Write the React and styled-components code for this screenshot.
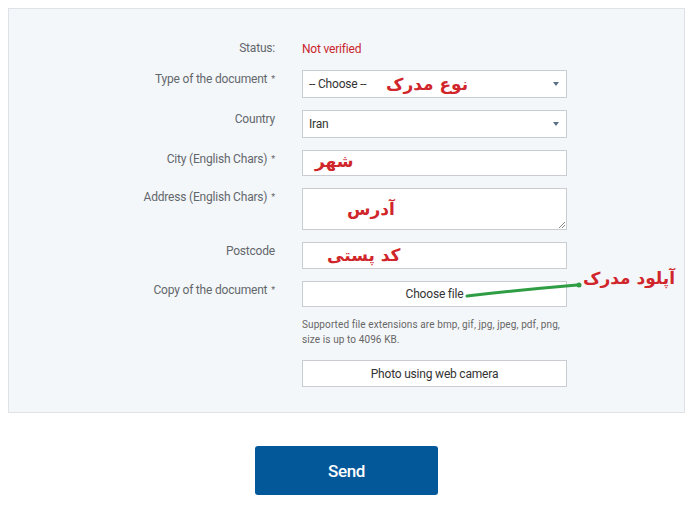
import styled, { createGlobalStyle } from 'styled-components';

const GlobalStyle = createGlobalStyle`
  body {
    margin: 0;
    background: #fff;
    font-family: Roboto, "Open Sans", sans-serif;
  }
`;

const Page = styled.div`
  width: 696px;
  padding-top: 8px;
`;

const Panel = styled.div`
  margin-left: 8px;
  width: 677px;
  box-sizing: border-box;
  background: #f4f7fa;
  border: 1px solid #dfe3e7;
  padding: 31px 0 25px;
  display: grid;
  grid-template-columns: 266px 265px;
  column-gap: 27px;
  row-gap: 12px;
  align-items: start;
`;

const Label = styled.div`
  text-align: right;
  font-size: 12px;
  line-height: 16px;
  padding-top: ${({ offset }) => offset || 0}px;
  color: #63676c;
  letter-spacing: -0.2px;
`;

const Star = styled.span`
  font-size: 9px;
  vertical-align: top;
  margin-left: 4px;
`;

const StatusValue = styled.div`
  font-size: 12px;
  line-height: 17px;
  padding-top: 1px;
  color: #c8262c;
  letter-spacing: -0.2px;
`;

const Field = styled.div`
  position: relative;
`;

const Box = styled.div`
  box-sizing: border-box;
  height: ${({ h }) => h || 27}px;
  background: #fff;
  border: 1px solid #c9cdd2;
  display: flex;
  align-items: center;
  padding: 0 6px;
  font-size: 12px;
  color: #333;
  letter-spacing: -0.2px;
`;

const Arrow = styled.span`
  margin-left: auto;
  width: 0;
  height: 0;
  border-left: 3.5px solid transparent;
  border-right: 3.5px solid transparent;
  border-top: 4px solid #5a6e84;
  margin-right: 1px;
`;

const Grip = styled.svg`
  position: absolute;
  right: 1px;
  bottom: 1px;
`;

const FileButton = styled.div`
  box-sizing: border-box;
  height: ${({ h }) => h || 27}px;
  background: #fff;
  border: 1px solid #c9cdd2;
  display: flex;
  align-items: center;
  justify-content: center;
  font-size: 12px;
  color: #333;
  letter-spacing: -0.2px;
`;

const Hint = styled.div`
  margin: 10px 0 13px;
  font-size: 10px;
  line-height: 15px;
  color: #666;
  letter-spacing: 0.1px;
`;

const Note = styled.span`
  position: absolute;
  left: ${({ x }) => x}px;
  top: ${({ y }) => y}px;
  font-family: "DejaVu Sans", sans-serif;
  font-weight: bold;
  font-size: 17px;
  line-height: 20px;
  color: #d0262b;
  white-space: nowrap;
  direction: rtl;
`;

const Stroke = styled.svg`
  position: absolute;
  left: 160px;
  top: 0;
`;

const Footer = styled.div`
  width: 677px;
  margin-left: 8px;
  display: flex;
  justify-content: center;
  padding-top: 33px;
`;

const SendButton = styled.button`
  width: 183px;
  height: 49px;
  border: none;
  border-radius: 3px;
  background: #03589a;
  color: #fff;
  font-family: Roboto, sans-serif;
  font-size: 17px;
  font-weight: 500;
  letter-spacing: -0.4px;
`;

export default function App() {
  return (
    <Page>
      <GlobalStyle />
      <Panel>
        <Label>Status:</Label>
        <StatusValue>Not verified</StatusValue>

        <Label offset={1}>
          Type of the document<Star>*</Star>
        </Label>
        <Field>
          <Box h={28}>
            -- Choose --
            <Arrow />
          </Box>
          <Note x={84} y={4}>نوع مدرک</Note>
        </Field>

        <Label offset={1}>Country</Label>
        <Field>
          <Box h={28}>
            Iran
            <Arrow />
          </Box>
        </Field>

        <Label offset={1}>
          City (English Chars)<Star>*</Star>
        </Label>
        <Field>
          <Box h={26} />
          <Note x={13} y={1}>شهر</Note>
        </Field>

        <Label offset={1}>
          Address (English Chars)<Star>*</Star>
        </Label>
        <Field>
          <Box h={42} />
          <Grip width="9" height="9" viewBox="0 0 9 9">
            <path d="M8 2 L2 8 M8 5 L5 8" stroke="#888" strokeWidth="1" />
          </Grip>
          <Note x={45} y={11}>آدرس</Note>
        </Field>

        <Label offset={1}>Postcode</Label>
        <Field>
          <Box />
          <Note x={25} y={3}>کد پستی</Note>
        </Field>

        <Label offset={1}>
          Copy of the document<Star>*</Star>
        </Label>
        <Field>
          <FileButton h={26}>Choose file</FileButton>
          <Stroke width="124" height="20" viewBox="0 0 124 20">
            <path
              d="M5 15 C40 11 80 7 115 4"
              stroke="#2e9d44"
              strokeWidth="3"
              fill="none"
              strokeLinecap="round"
            />
            <circle cx="117" cy="4" r="2.5" fill="#2e9d44" />
          </Stroke>
          <Note x={281} y={-13}>آپلود مدرک</Note>
          <Hint>
            Supported file extensions are bmp, gif, jpg, jpeg, pdf, png,
            <br />
            size is up to 4096 KB.
          </Hint>
          <FileButton>Photo using web camera</FileButton>
        </Field>
      </Panel>
      <Footer>
        <SendButton>Send</SendButton>
      </Footer>
    </Page>
  );
}
